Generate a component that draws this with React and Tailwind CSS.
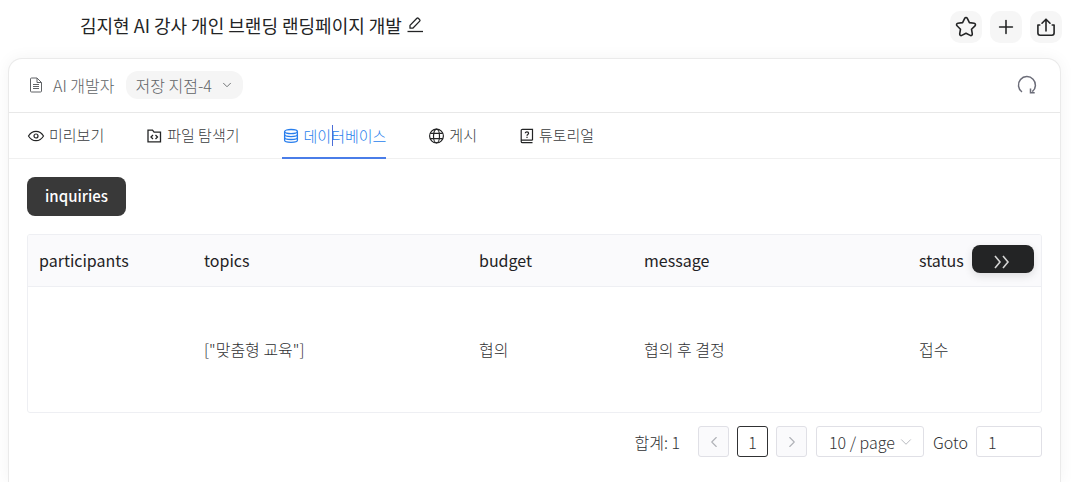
import React, { useState } from 'react'
import { ChevronDown, ChevronLeft, ChevronRight, Plus } from 'lucide-react'

const COLUMNS = [
  { key: 'participants', width: 'w-[165px]' },
  { key: 'topics', width: 'w-[275px]' },
  { key: 'budget', width: 'w-[165px]' },
  { key: 'message', width: 'w-[275px]' },
  { key: 'status', width: 'w-auto' },
]

const ROWS = [
  { participants: '', topics: '["맞춤형 교육"]', budget: '협의', message: '협의 후 결정', status: '접수' },
]

const TABS = [
  { id: 'preview', label: '미리보기', icon: EyeIcon },
  { id: 'files', label: '파일 탐색기', icon: FolderCodeIcon },
  { id: 'database', label: '데이터베이스', icon: DatabaseIcon },
  { id: 'publish', label: '게시', icon: GlobeIcon },
  { id: 'tutorial', label: '튜토리얼', icon: TutorialIcon },
]

function App() {
  const [activeTab, setActiveTab] = useState('database')

  return (
    <div className="flex min-h-screen flex-col bg-white font-['Noto_Sans_CJK_KR',sans-serif] text-[#303133]">
      <header className="flex h-[58px] items-start justify-between pt-[11px] pr-[9px] pl-20">
        <div className="flex items-center gap-1">
          <h1 className="text-lg leading-7 font-normal text-[#232425]">김지현 AI 강사 개인 브랜딩 랜딩페이지 개발</h1>
          <button type="button" aria-label="제목 편집">
            <PencilIcon />
          </button>
        </div>
        <div className="flex items-center gap-2">
          <HeaderButton label="즐겨찾기">
            <StarIcon />
          </HeaderButton>
          <HeaderButton label="새로 만들기">
            <Plus size={22} strokeWidth={1.7} />
          </HeaderButton>
          <HeaderButton label="공유">
            <ShareIcon />
          </HeaderButton>
        </div>
      </header>

      <main className="mr-[10px] ml-2 flex flex-1 flex-col rounded-t-[14px] border border-b-0 border-[#eaeaea] bg-white shadow-[0_0_16px_rgba(0,0,0,0.05)]">
        {/* Project bar */}
        <div className="flex h-[54px] items-center justify-between border-b border-[#e8e8e8] pr-[23px] pb-[2px] pl-5">
          <div className="flex items-center text-[#606366]">
            <DocumentIcon />
            <span className="ml-[10px] text-base font-light">AI 개발자</span>
            <button type="button" className="ml-3 flex h-7 items-center gap-2 rounded-xl bg-[#f5f5f5] px-[9px] text-base font-light">
              저장 지점-4
              <ChevronDown size={14} strokeWidth={1.5} />
            </button>
          </div>
          <button type="button" aria-label="새로고침">
            <RefreshIcon />
          </button>
        </div>

        {/* Tabs */}
        <nav className="flex h-[46px] gap-[42px] border-b border-[#f0f0f0] pl-[18px]">
          {TABS.map(({ id, label, icon: Icon }) => (
            <button
              key={id}
              type="button"
              onClick={() => setActiveTab(id)}
              className={
                activeTab === id
                  ? 'relative -mb-px flex items-center gap-1 border-b-2 border-[#4a7de8] pt-[2px] text-[15px] font-light text-[#287eed]'
                  : 'flex items-center gap-1 text-[15px] font-light text-[#3a3c3e]'
              }
            >
              <Icon />
              {label}
              {activeTab === id && <span className="absolute top-3 left-[50px] h-[21px] w-px bg-[#4a6dd8]" />}
            </button>
          ))}
        </nav>

        <section className="px-[18px] pt-[18px]">
          <button type="button" className="h-[39px] rounded-lg bg-[#393939] px-[18px] text-[15px] font-medium text-white">
            inquiries
          </button>

          <div className="relative mt-[18px] overflow-hidden rounded-[3px] border border-[#eeeff3]">
            <table className="w-full table-fixed border-collapse text-left text-base">
              <thead className="bg-[#fafafc]">
                <tr className="h-[51px] border-b border-[#eeeff3]">
                  {COLUMNS.map((col) => (
                    <th key={col.key} className={`${col.width} px-[11px] font-normal text-[#1f2225]`}>
                      {col.key}
                    </th>
                  ))}
                </tr>
              </thead>
              <tbody>
                {ROWS.map((row, i) => (
                  <tr key={i} className="h-[126px]">
                    {COLUMNS.map((col) => (
                      <td key={col.key} className="px-[11px] font-light">
                        {row[col.key]}
                      </td>
                    ))}
                  </tr>
                ))}
              </tbody>
            </table>
            <button
              type="button"
              aria-label="다음 열"
              className="absolute top-[10px] right-[7px] flex h-7 w-[62px] items-center justify-center rounded-lg bg-[#232425] pt-[5px] pr-[3px] text-[#d4d4d4] shadow-[0_3px_8px_rgba(0,0,0,0.12)]"
            >
              <DoubleChevronIcon />
            </button>
          </div>

          {/* Pagination */}
          <div className="mt-[13px] flex items-center justify-end text-base font-light">
            <span className="mr-[18px]">합계: 1</span>
            <div className="flex gap-2">
              <PageButton label="이전" disabled>
                <ChevronLeft size={18} strokeWidth={1.5} />
              </PageButton>
              <button type="button" aria-current="page" className="h-[31px] w-[31px] rounded-[3px] border border-[#303133]">
                1
              </button>
              <PageButton label="다음" disabled>
                <ChevronRight size={18} strokeWidth={1.5} />
              </PageButton>
            </div>
            <div className="relative ml-[9px]">
              <select aria-label="페이지 크기" className="h-[31px] w-[108px] appearance-none rounded-[3px] border border-[#e0e0e6] bg-white pl-3">
                <option>10 / page</option>
                <option>20 / page</option>
                <option>50 / page</option>
              </select>
              <ChevronDown size={18} strokeWidth={1.2} className="pointer-events-none absolute top-[7px] right-[9px] text-[#b0b2b8]" />
            </div>
            <label htmlFor="goto-page" className="ml-[9px]">
              Goto
            </label>
            <input id="goto-page" defaultValue="1" className="ml-2 h-[31px] w-[66px] rounded-[3px] border border-[#e0e0e6] px-[11px]" />
          </div>
        </section>
      </main>
    </div>
  )
}

function HeaderButton({ label, children }) {
  return (
    <button type="button" aria-label={label} className="flex h-8 w-8 items-center justify-center rounded-[10px] bg-[#f6f6f6] text-[#232425]">
      {children}
    </button>
  )
}

function PageButton({ label, disabled, children }) {
  return (
    <button
      type="button"
      aria-label={label}
      disabled={disabled}
      className="flex h-[31px] w-[31px] items-center justify-center rounded-[3px] border border-[#e0e0e6] bg-[#fafafc] text-[#b0b2b8]"
    >
      {children}
    </button>
  )
}

function PencilIcon() {
  return (
    <svg width="18" height="18" viewBox="0 0 18 18" fill="none" stroke="#232425" strokeWidth="1.3" strokeLinejoin="round">
      <path d="M4 12.2V9.4L10.9 2.3a1 1 0 0 1 1.4 0l1.4 1.4a1 1 0 0 1 0 1.4L6.8 12.2z" />
      <path d="M1.5 15.5h15.5" />
    </svg>
  )
}

function StarIcon() {
  return (
    <svg width="22" height="22" viewBox="0 0 22 22" fill="none" stroke="currentColor" strokeWidth="1.6" strokeLinejoin="round">
      <path d="M9.7 2.3a1.45 1.45 0 0 1 2.6 0l2.1 4.3 4.8.7a1.45 1.45 0 0 1 .8 2.5l-3.5 3.4.8 4.7a1.45 1.45 0 0 1-2.1 1.5L11 17.2l-4.2 2.2a1.45 1.45 0 0 1-2.1-1.5l.8-4.7L2 9.8a1.45 1.45 0 0 1 .8-2.5l4.8-.7z" />
    </svg>
  )
}

function ShareIcon() {
  return (
    <svg width="20" height="20" viewBox="0 0 20 20" fill="none" stroke="currentColor" strokeWidth="1.6" strokeLinecap="round" strokeLinejoin="round">
      <path d="M10 14V2.5M6 6.2l4-4 4 4" />
      <path d="M3.8 8H1.9v8a2.2 2.2 0 0 0 2.2 2.2h11.8a2.2 2.2 0 0 0 2.2-2.2V8h-1.9" />
    </svg>
  )
}

function RefreshIcon() {
  return (
    <svg width="20" height="20" viewBox="0 0 20 20" fill="none" stroke="#6b6c78" strokeWidth="1.5">
      <path d="M5 17a8.5 8.5 0 1 1 10.3-.3" />
      <path d="M13.5 13.5v4.3h4.2" />
    </svg>
  )
}

function DocumentIcon() {
  return (
    <svg width="14" height="16" viewBox="0 0 14 16" fill="none" stroke="currentColor" strokeLinejoin="round">
      <path d="M2.5 1H8l4.5 4.5V14a1 1 0 0 1-1 1h-9a1 1 0 0 1-1-1V2a1 1 0 0 1 1-1z" />
      <path d="M8 1v4.5h4.5M4 7.5h6M4 9.5h6M4 11.5h6" />
    </svg>
  )
}

function EyeIcon() {
  return (
    <svg width="18" height="16" viewBox="0 0 18 16" fill="none" stroke="#232425" strokeWidth="1.2">
      <path d="M1.5 8Q4.3 3.3 9 3.3T16.5 8Q13.7 12.7 9 12.7T1.5 8z" />
      <circle cx="9" cy="8" r="2" />
    </svg>
  )
}

function FolderCodeIcon() {
  return (
    <svg width="17" height="16" viewBox="0 0 17 16" fill="none" stroke="#232425" strokeWidth="1.3">
      <path d="M2 2.2h4.5l1.6 2h6.4v9.6H2z" />
      <path d="m7 7-2 2 2 2M9.5 7l2 2-2 2" />
    </svg>
  )
}

function DatabaseIcon() {
  return (
    <svg width="18" height="16" viewBox="0 0 18 16" fill="none" stroke="currentColor" strokeWidth="1.3">
      <ellipse cx="9" cy="3.6" rx="6.4" ry="2.1" />
      <path d="M2.6 3.6v8.6c0 1.2 2.9 2.1 6.4 2.1s6.4-.9 6.4-2.1V3.6" />
      <path d="M2.6 6.5c0 1.2 2.9 2.1 6.4 2.1s6.4-.9 6.4-2.1M2.6 9.4c0 1.2 2.9 2.1 6.4 2.1s6.4-.9 6.4-2.1" />
    </svg>
  )
}

function GlobeIcon() {
  return (
    <svg width="17" height="16" viewBox="0 0 17 16" fill="none" stroke="#232425" strokeWidth="1.2">
      <circle cx="8.5" cy="8" r="6.9" />
      <ellipse cx="8.5" cy="8" rx="3" ry="6.9" />
      <path d="M2.2 5.4h12.6M2.2 10.6h12.6" />
    </svg>
  )
}

function TutorialIcon() {
  return (
    <svg width="16" height="16" viewBox="0 0 16 16" fill="none" stroke="#232425" strokeWidth="1.2">
      <path d="M13.5 12.2V1.3H3.5A1.3 1.3 0 0 0 2.2 2.6v10.8a1.3 1.3 0 0 0 1.3 1.3h10M2.2 12.2h11.3" />
      <path d="M6.3 5.3c0-2 3.3-1.9 3.3 0 0 1.2-1.6 1.2-1.6 2.5M8 8.8v1.2" />
    </svg>
  )
}

function DoubleChevronIcon() {
  return (
    <svg width="18" height="14" viewBox="0 0 18 14" fill="none" stroke="currentColor" strokeWidth="1.6">
      <path d="m2 1 5 6-5 6M10 1l5 6-5 6" />
    </svg>
  )
}

export default App
